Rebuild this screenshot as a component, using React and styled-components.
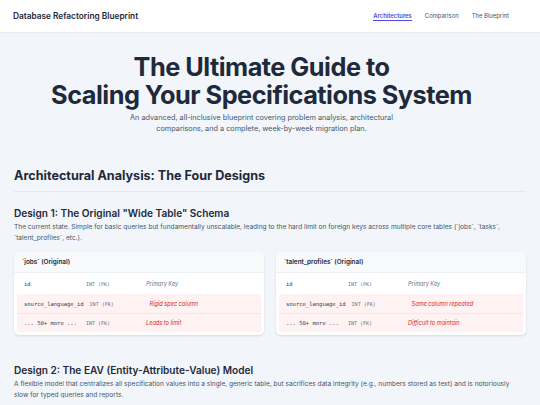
import React from 'react';
import styled, { createGlobalStyle } from 'styled-components';

const GlobalStyle = createGlobalStyle`
  html, body {
    margin: 0;
    padding: 0;
    background: #f2f5f9;
    font-family: Inter, "Noto Sans", sans-serif;
    color: #1e293b;
  }
  * { box-sizing: border-box; }
`;

const TopBar = styled.header`
  display: flex;
  align-items: center;
  justify-content: space-between;
  height: 33px;
  padding: 0 31px 0 13px;
  background: #ffffff;
  border-bottom: 1px solid #e8ecf1;
`;

const Brand = styled.div`
  font-size: 8.3px;
  font-weight: 600;
  color: #1f2937;
`;

const NavLinks = styled.nav`
  display: flex;
  gap: 13px;
`;

const NavLink = styled.a`
  font-size: 5.9px;
  color: ${(p) => (p.$active ? '#4f46e5' : '#475569')};
  font-weight: ${(p) => (p.$active ? 600 : 400)};
  text-decoration: none;
  padding-bottom: 1px;
  border-bottom: ${(p) => (p.$active ? '1px solid #4f46e5' : '1px solid transparent')};
`;

const Hero = styled.section`
  display: flex;
  flex-direction: column;
  align-items: center;
  text-align: center;
  padding: 20px 17px 0 0;
`;

const HeroTitle = styled.h1`
  margin: 0;
  font-size: 25.3px;
  line-height: 27.5px;
  font-weight: 700;
  letter-spacing: -0.02em;
  color: #1e293b;
`;

const HeroLead = styled.p`
  margin: 4px 0 0;
  max-width: 300px;
  font-size: 7.3px;
  line-height: 11px;
  color: #475569;
`;

const Main = styled.main`
  max-width: 540px;
  padding: 33px 14px 0;
`;

const SectionTitle = styled.h2`
  margin: 0;
  padding-bottom: 6px;
  font-size: 12.6px;
  line-height: 18px;
  font-weight: 700;
  color: #1e293b;
  border-bottom: 1px solid #e2e8f0;
`;

const Design = styled.div`
  margin-top: ${(p) => p.$gap}px;
`;

const DesignTitle = styled.h3`
  margin: 0;
  font-size: 10.1px;
  line-height: 14px;
  font-weight: 600;
  color: #1e293b;
`;

const DesignText = styled.p`
  margin: 2px 0 0;
  font-size: 6.6px;
  line-height: 10.5px;
  color: #475569;
`;

const KeepTogether = styled.span`
  white-space: nowrap;
`;

const CardGrid = styled.div`
  display: grid;
  grid-template-columns: 1fr 1fr;
  gap: 12px;
  margin-top: 9px;
`;

const Card = styled.div`
  background: #ffffff;
  border-radius: 5px;
  box-shadow: 0 1px 3px rgba(15, 23, 42, 0.08), 0 1px 2px rgba(15, 23, 42, 0.05);
  overflow: hidden;
`;

const CardHead = styled.div`
  height: 21px;
  display: flex;
  align-items: center;
  padding: 0 8px;
  font-size: 6.4px;
  font-weight: 600;
  color: #1e293b;
  background: #f8fafc;
  border-bottom: 1px solid #eef1f5;
`;

const CardBody = styled.div`
  padding: 0 3px 3px;
`;

const Row = styled.div`
  display: grid;
  grid-template-columns: minmax(62px, auto) 60px 1fr;
  align-items: center;
  height: ${(p) => (p.$warn ? 19 : 21)}px;
  padding: 0 7px;
  background: ${(p) => (p.$warn ? '#fef2f2' : 'transparent')};
  border-top: ${(p) => (p.$divided ? '1px solid #fbe3e3' : 'none')};
`;

const ColName = styled.span`
  font-family: "DejaVu Sans Mono", "Liberation Mono", monospace;
  font-size: 5.5px;
  color: #334155;
  white-space: nowrap;
  padding-right: 6px;
`;

const ColType = styled.span`
  font-family: "DejaVu Sans Mono", "Liberation Mono", monospace;
  font-size: 5px;
  color: #64748b;
  white-space: nowrap;
`;

const ColNote = styled.span`
  font-size: 5.6px;
  font-style: italic;
  color: ${(p) => (p.$warn ? '#dc2626' : '#64748b')};
`;

const tables = [
  {
    name: '`jobs` (Original)',
    rows: [
      { col: 'id', type: 'INT (PK)', note: 'Primary Key' },
      { col: 'source_language_id', type: 'INT (FK)', note: 'Rigid spec column', warn: true },
      { col: '... 50+ more ...', type: 'INT (FK)', note: 'Leads to limit', warn: true },
    ],
  },
  {
    name: '`talent_profiles` (Original)',
    rows: [
      { col: 'id', type: 'INT (PK)', note: 'Primary Key' },
      { col: 'source_language_id', type: 'INT (FK)', note: 'Same column repeated', warn: true },
      { col: '... 50+ more ...', type: 'INT (FK)', note: 'Difficult to maintain', warn: true },
    ],
  },
];

function SchemaCard({ table }) {
  return (
    <Card>
      <CardHead>{table.name}</CardHead>
      <CardBody>
        {table.rows.map((r, i) => (
          <Row key={r.col} $warn={r.warn} $divided={r.warn && i > 1}>
            <ColName>{r.col}</ColName>
            <ColType>{r.type}</ColType>
            <ColNote $warn={r.warn}>{r.note}</ColNote>
          </Row>
        ))}
      </CardBody>
    </Card>
  );
}

export default function App() {
  return (
    <>
      <GlobalStyle />
      <TopBar>
        <Brand>Database Refactoring Blueprint</Brand>
        <NavLinks>
          <NavLink $active>Architectures</NavLink>
          <NavLink>Comparison</NavLink>
          <NavLink>The Blueprint</NavLink>
        </NavLinks>
      </TopBar>
      <Hero>
        <HeroTitle>
          The Ultimate Guide to
          <br />
          Scaling Your Specifications System
        </HeroTitle>
        <HeroLead>
          An advanced, all-inclusive blueprint covering problem analysis, architectural
          comparisons, and a complete, week-by-week migration plan.
        </HeroLead>
      </Hero>
      <Main>
        <SectionTitle>Architectural Analysis: The Four Designs</SectionTitle>
        <Design $gap={14}>
          <DesignTitle>Design 1: The Original "Wide Table" Schema</DesignTitle>
          <DesignText>
            The current state. Simple for basic queries but fundamentally unscalable, leading to the
            hard limit on foreign keys across multiple core tables (`jobs`, `tasks`,
            `talent_profiles`, etc.).
          </DesignText>
          <CardGrid>
            {tables.map((t) => (
              <SchemaCard key={t.name} table={t} />
            ))}
          </CardGrid>
        </Design>
        <Design $gap={28}>
          <DesignTitle>Design 2: The EAV (Entity-Attribute-Value) Model</DesignTitle>
          <DesignText>
            A flexible model that centralizes all specification values into a single, generic table,
            but sacrifices data integrity (e.g., numbers stored as text) and is notoriously{' '}
            <KeepTogether>slow for typed</KeepTogether> queries and reports.
          </DesignText>
        </Design>
      </Main>
    </>
  );
}
